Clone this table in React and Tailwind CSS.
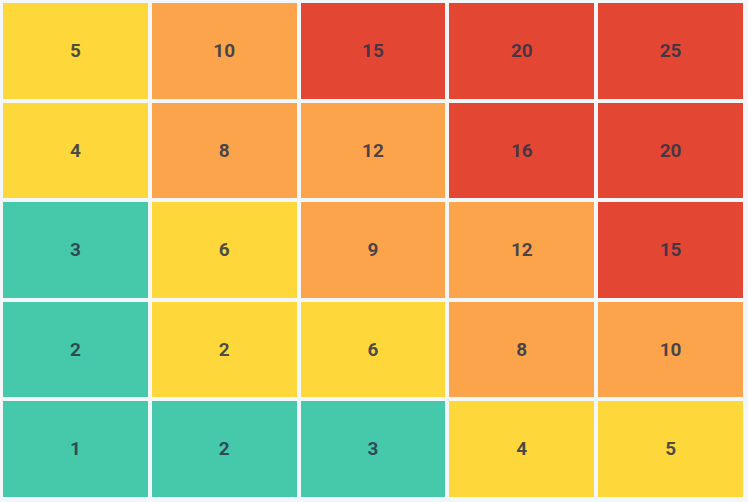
import React from "react";

const Y = "bg-[#fed83a]";
const O = "bg-[#fba44c]";
const R = "bg-[#e34733]";
const G = "bg-[#45c9aa]";

// risk matrix rows, top (likelihood 5) to bottom (likelihood 1)
const ROWS = [
  [[5, Y], [10, O], [15, R], [20, R], [25, R]],
  [[4, Y], [8, O], [12, O], [16, R], [20, R]],
  [[3, G], [6, Y], [9, O], [12, O], [15, R]],
  [[2, G], [2, Y], [6, Y], [8, O], [10, O]],
  [[1, G], [2, G], [3, G], [4, Y], [5, Y]],
];

export default function App() {
  return (
    <div
      className="h-[502px] w-[748px] bg-[#f4f7fa] pt-[3px] pl-[3px] pr-[5px] pb-[5px]"
      style={{ fontFamily: "Roboto, 'Liberation Sans', sans-serif" }}
    >
      <div className="grid h-full grid-cols-5 grid-rows-5 gap-[4px]">
        {ROWS.flat().map(([n, bg], i) => (
          <div
            key={i}
            className={`flex items-center justify-center pt-px ${bg} text-[19px] font-bold text-[#2a3348]/85`}
          >
            {n}
          </div>
        ))}
      </div>
    </div>
  );
}
